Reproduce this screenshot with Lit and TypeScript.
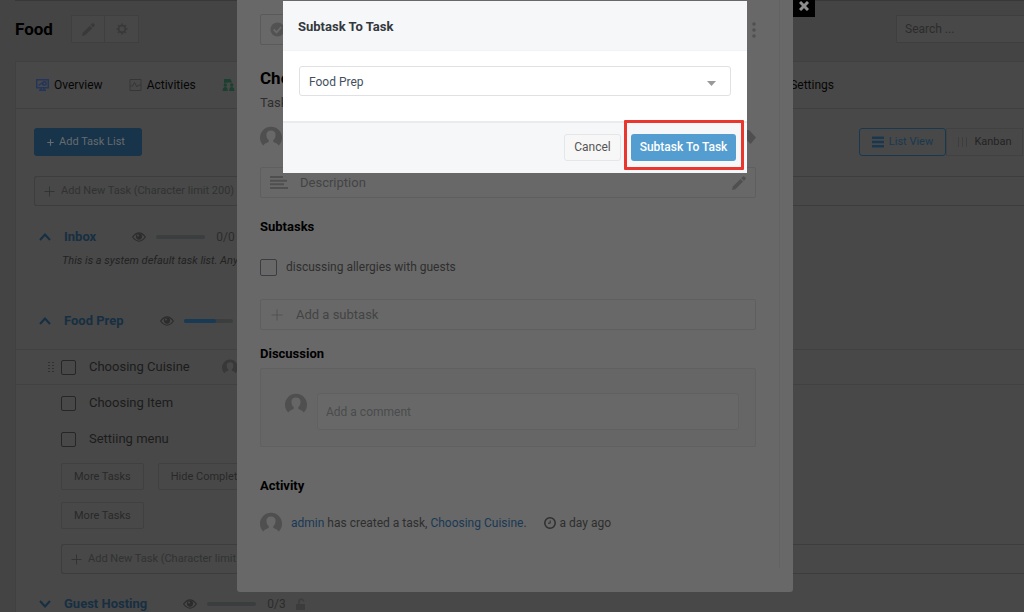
import { LitElement, html, css, svg, nothing } from "lit";
import { customElement, property } from "lit/decorators.js";

const avatar = html`<svg class="avatar" viewBox="0 0 22 22" aria-hidden="true">
  <path d="M3.200 19.500A11 11 0 1 1 18.800 19.500Q18 17.600 14 16.300Q12.900 15.800 13.200 14.600Q15.600 12.600 15.600 9.200Q15.600 4.600 11 4.600Q6.400 4.600 6.400 9.200Q6.400 12.600 8.800 14.600Q9.100 15.800 8 16.300Q4 17.600 3.200 19.500Z"/>
</svg>`;

const plus = html`<svg class="plus" viewBox="0 0 12 12" aria-hidden="true"><path d="M6 .5v11M.5 6h11"/></svg>`;

const pencil = html`<svg class="pencil" viewBox="0 0 14 14" aria-hidden="true">
  <path d="M0 14l.8-3.400L8.500 3l2.600 2.600-7.700 7.600zM9.300 2.200L11 .4q.6-.5 1.200 0l1.400 1.400q.5.6 0 1.200L11.900 4.800z"/>
</svg>`;

const eye = html`<svg class="eye" viewBox="0 0 14 10" aria-hidden="true">
  <path d="M.6 5Q7-3.300 13.400 5Q7 13.300.6 5Z" fill="none" stroke="currentColor" stroke-width="1.200"/>
  <circle cx="7" cy="4.600" r="3.100" fill="currentColor"/><circle cx="6" cy="3.500" r="1" fill="#484848"/>
</svg>`;

@customElement("task-list-head")
class TaskListHead extends LitElement {
  @property() name = "";
  @property() count = "";
  @property({ type: Number }) progress = 0;
  @property({ type: Boolean }) open = false;
  @property({ type: Boolean }) locked = false;

  static styles = css`
    :host { display: flex; align-items: center; height: 20px; color: #2c2c2c; }
    button { all: unset; width: 14px; height: 14px; display: flex; align-items: center; color: #172f42; }
    .chevron { width: 12px; height: 8px; fill: none; stroke: currentColor; stroke-width: 2; }
    a { margin-left: 11px; color: #172f42; font-weight: 700; font-size: 13px; text-decoration: none; }
    .eye { width: 14px; height: 10px; margin-left: 36px; }
    .track { width: 49px; height: 4px; border-radius: 2px; background: #3b3e3e; margin: 0 11px 0 10px; }
    .fill { height: 100%; border-radius: 2px; background: #183a54; }
    .count { font-size: 12px; }
    .lock { width: 10px; height: 12px; margin-left: 10px; color: #3c3c3c; }
  `;

  render() {
    return html`
      <button aria-label="Toggle ${this.name}">
        <svg class="chevron" viewBox="0 0 12 8"><path d=${this.open ? "M1 7l5-5.500 5 5.500" : "M1 1l5 5.500 5-5.500"} /></svg>
      </button>
      <a href="#">${this.name}</a>
      ${eye}
      <div class="track"><div class="fill" style="width:${this.progress}%"></div></div>
      <span class="count">${this.count}</span>
      ${this.locked
        ? html`<svg class="lock" viewBox="0 0 10 12" aria-hidden="true">
            <path d="M0 6h9v6H0z" fill="currentColor" /><path d="M3 6V3.500a2.300 2.300 0 0 1 4.600 0" fill="none" stroke="currentColor" stroke-width="1.400" />
          </svg>`
        : nothing}
    `;
  }
}

@customElement("project-page")
class ProjectPage extends LitElement {
  static styles = css`
    :host { display: block; background: #444; padding-left: 15px; color: #1c1c1c; font-size: 11px; }
    * { box-sizing: border-box; }
    button, input { font: inherit; color: inherit; }
    a { color: inherit; text-decoration: none; }
    .top { display: flex; align-items: center; border-top: 1px solid #383838; padding: 14px 0 18px; }
    h1 { margin: 0; font-size: 17px; line-height: 28px; font-weight: 700; color: #000; width: 56px; }
    .tools { display: flex; }
    .tools button { width: 34px; height: 28px; display: flex; align-items: center; justify-content: center; padding: 0;
      background: #474747; border: 1px solid #3f3f3f; color: #393939; }
    .tools button + button { border-left: 0; }
    .pencil { width: 13px; height: 13px; fill: currentColor; }
    .gear { width: 12px; height: 12px; }
    .search { margin-left: auto; width: 128px; height: 28px; padding: 0 8px; border: 1px solid #3e3e3e; border-right: 0;
      background: #484848; outline: 0; font-size: 12px; }
    input::placeholder { color: inherit; opacity: 1; }
    .search::placeholder { color: #2c2c2c; }
    .panel { background: #484848; border: solid #404040; border-width: 1px 0 0 1px; }
    nav { display: flex; align-items: center; height: 47px; gap: 26px; padding: 0 190px 0 20px; border-bottom: 1px solid #3f3f3f;
      font-size: 12px; color: #060606; }
    nav a { display: flex; align-items: center; gap: 5px; }
    nav a:last-child { margin-left: auto; }
    nav svg { width: 13px; height: 12px; }
    .bar { display: flex; align-items: center; padding: 19px 1px 20px 18px; }
    .add { height: 28px; width: 108px; border: 0; border-radius: 3px; background: #17344a; color: #686b6d; padding: 0 4px 0 0;
      display: flex; align-items: center; justify-content: center; gap: 5px; }
    .add .plus { width: 7px; height: 7px; stroke-width: 2; }
    .views { margin-left: auto; display: flex; }
    .views button { height: 28px; width: 77px; padding: 0; border: 1px solid #414141; background: none; display: flex; align-items: center;
      justify-content: center; gap: 5px; color: #232323; }
    .views .on { width: 87px; border-color: #193850; border-radius: 3px; color: #193850; }
    .views svg { width: 12px; height: 12px; }
    .plus { width: 11px; height: 11px; fill: none; stroke: currentColor; flex: none; }
    .new { display: flex; align-items: center; gap: 6px; height: 30px; border: 1px solid #3d3d3d; border-right: 0; border-radius: 3px 0 0 3px;
      padding-left: 9px; color: #303232; margin-left: 18px; }
    .new input { flex: 1; min-width: 0; border: 0; background: none; outline: 0; padding: 0; }
    .new.inner { margin: 15px 0 20px 45px; }
    .head { padding-left: 23px; }
    .first { margin-top: 21px; }
    .desc { margin: 4px 0 0 46px; line-height: 20px; font-style: italic; color: #222; }
    .second { margin-top: 40px; padding-bottom: 18px; }
    .task { display: flex; align-items: center; height: 36px; padding-left: 31px; font-size: 13px; }
    .task.hover { border: solid #414141; border-width: 1px 0; }
    .grip { width: 8px; height: 12px; margin-right: 6px; fill: #303030; }
    .task label { display: flex; align-items: center; gap: 13px; }
    .task input { appearance: none; margin: 0; width: 15px; height: 15px; border: 1px solid #262626; border-radius: 2px; }
    .avatar { width: 16px; height: 16px; fill: #383838; margin-left: 32px; }
    .more { display: flex; gap: 14px; padding: 6px 0 0 45px; }
    .more + .more { padding-top: 12px; }
    .more button { height: 27px; padding: 0 12px; background: none; border: 1px solid #404040; border-radius: 2px; color: #282828; }
  `;

  render() {
    return html`
      <header class="top">
        <h1>Food</h1>
        <div class="tools">
          <button aria-label="Edit">${pencil}</button>
          <button aria-label="Project settings">
            <svg class="gear" viewBox="0 0 14 14" fill="none" stroke="currentColor">
              <circle cx="7" cy="7" r="3.900" stroke-width="2" />
              <path stroke-width="2" d="M7 .5v2M7 11.500v2M.5 7h2M11.500 7h2M2.400 2.400l1.400 1.400M10.200 10.200l1.400 1.400M2.400 11.600l1.400-1.400M10.200 3.800l1.400-1.400" />
            </svg>
          </button>
        </div>
        <input class="search" type="search" placeholder="Search ..." aria-label="Search" />
      </header>
      <main class="panel">
        <nav>
          <a href="#"><svg viewBox="0 0 13 12" fill="none" stroke="#22355c" stroke-width="1.400"><path d="M.7.7h11.600v8H.7zM3 11.200h7M2.500 6.500l3.500-2.500 1 2M5 9v2M8 9v2" /><circle cx="8.500" cy="4.500" r="1.700" /></svg>Overview</a>
          <a href="#"><svg viewBox="0 0 12 12" fill="none" stroke="#363636"><path d="M.5.5h11v11H.5zM.5 7h2.500l2-3.500L7.500 8 9 6h2.500" /></svg>Activities</a>
          <a href="#"><svg viewBox="0 0 12 12" fill="#1b4030"><circle cx="2.800" cy="6" r="1.700" /><circle cx="9.200" cy="6" r="1.700" /><path d="M1.500 0h6.500l1.500 3.500H5.500L1.500 4zM0 12Q.3 8 2.800 8T5.300 12zM6.700 12Q6.700 8 9.200 8T12 12z" /></svg>Discussions</a>
          <a href="#">Settings</a>
        </nav>
        <div class="bar">
          <button class="add">${plus}Add Task List</button>
          <div class="views">
            <button class="on"><svg viewBox="0 0 12 12" fill="currentColor"><path d="M0 .5h12v2.500H0zM0 4.800h12v2.500H0zM0 9h12v2.500H0z" /></svg>List View</button>
            <button><svg viewBox="0 0 12 12" stroke="#3c3e3e"><path d="M1.500 1v10M5.500 1v10M9.500 1v10" /></svg>Kanban</button>
          </div>
        </div>
        <label class="new">${plus}<input placeholder="Add New Task (Character limit 200)" /></label>
        <div class="head first"><task-list-head name="Inbox" count="0/0" open></task-list-head></div>
        <p class="desc">This is a system default task list. Any</p>
        <div class="head second"><task-list-head name="Food Prep" count="2/3" progress="67" open></task-list-head></div>
        ${["Choosing Cuisine", "Choosing Item", "Settiing menu"].map(
          (name, i) => html`<div class="task ${i === 0 ? "hover" : ""}">
            <svg class="grip" viewBox="0 0 8 12">${i === 0
              ? [1, 4, 7, 10].map((y) => svg`<rect x="1" y=${y} width="2" height="1"/><rect x="5" y=${y} width="2" height="1"/>`)
              : nothing}</svg>
            <label><input type="checkbox" />${name}</label>
            ${i === 0 ? avatar : nothing}
          </div>`
        )}
        <div class="more"><button>More Tasks</button><button>Hide Completed</button></div>
        <div class="more"><button>More Tasks</button></div>
        <label class="new inner">${plus}<input placeholder="Add New Task (Character limit 200)" /></label>
        <div class="head"><task-list-head name="Guest Hosting" count="0/3" locked></task-list-head></div>
      </main>
    `;
  }
}

@customElement("task-detail")
class TaskDetail extends LitElement {
  static styles = css`
    :host { display: block; position: relative; width: 556px; height: 592px; background: #686868; color: #2e2e2e; border-radius: 0 0 3px 3px; }
    * { box-sizing: border-box; }
    input { font: inherit; color: inherit; outline: 0; }
    input::placeholder { color: inherit; opacity: 1; }
    a { color: #193854; text-decoration: none; }
    .close { position: absolute; left: 100%; top: 0; width: 22px; height: 17px; padding: 0 0 6px; border: 0; background: #000; color: #8d8d8d;
      display: flex; align-items: center; justify-content: center; }
    .close svg { width: 10px; height: 10px; stroke: currentColor; stroke-width: 3; }
    .content { height: 568px; margin-right: 13px; padding: 14px 23px 0 23px; border-right: 1px solid #626262; }
    .row { display: flex; align-items: center; }
    .between { justify-content: space-between; }
    .done { width: 34px; height: 31px; padding: 0; background: none; border: 1px solid #5a5a5a; border-radius: 2px; }
    .done svg { width: 15px; height: 15px; display: block; margin: auto; }
    .dots { all: unset; width: 4px; height: 18px; }
    .dots svg { display: block; width: 4px; height: 18px; fill: #505050; }
    h2 { margin: 21px 0 0; font-size: 17px; line-height: 24px; color: #000; font-weight: 700; }
    .list { font-size: 13px; line-height: 20px; margin: 3px 0 13px; }
    .avatar { width: 22px; height: 22px; fill: #4f4f4f; flex: none; }
    .tag { width: 12px; height: 14px; fill: #4f4f4f; }
    .box { display: flex; align-items: center; height: 31px; border: 1px solid #5f5f5f; color: #434444; font-size: 13px; padding: 0 9px; border-radius: 2px; }
    .box input { flex: 1; min-width: 0; border: 0; background: none; padding: 0; }
    .description { margin-top: 19px; }
    .lines { width: 18px; height: 13px; stroke: #4f4f4f; stroke-width: 2; margin-right: 12px; }
    .pencil { width: 14px; height: 14px; fill: #505050; }
    h3 { margin: 0; font-size: 13px; line-height: 20px; font-weight: 700; color: #000; }
    .subtasks { margin-top: 19px; }
    .subtask { display: flex; align-items: center; gap: 9px; height: 20px; margin: 20px 0 22px; }
    .subtask input { appearance: none; margin: 0; width: 17px; height: 17px; border: 1px solid #3a3e42; border-radius: 2px; }
    .plus { width: 12px; height: 12px; fill: none; stroke: #525252; margin: 0 13px 0 1px; }
    .discussion { margin-top: 14px; }
    .comment { display: flex; gap: 10px; height: 79px; border: 1px solid #606060; border-radius: 2px; background: #666; margin-top: 4px; padding: 24px 16px 16px 24px; }
    .comment input { flex: 1; min-width: 0; height: 37px; border: 1px solid #616161; border-radius: 3px; background: #686868; color: #494c4c; padding: 0 8px; }
    .activity { margin-top: 29px; }
    .event { display: flex; align-items: center; margin-top: 16px; height: 22px; }
    .event p { margin: 0 17px 0 9px; }
    .clock { width: 12px; height: 12px; margin-right: 4px; fill: none; stroke: currentColor; }
  `;

  render() {
    return html`
      <button class="close" aria-label="Close"><svg viewBox="0 0 10 10"><path d="M1 1l8 8M9 1l-8 8" /></svg></button>
      <div class="content">
        <div class="row between">
          <button class="done" aria-label="Mark complete"><svg viewBox="0 0 16 16"><circle cx="8" cy="8" r="7.500" fill="#525252" /><path d="M4 8l3 3 5-5.500" fill="none" stroke="#686868" stroke-width="2" /></svg></button>
          <button class="dots" aria-label="More actions"><svg viewBox="0 0 4 18"><circle cx="2" cy="3" r="1.800" /><circle cx="2" cy="9" r="1.800" /><circle cx="2" cy="15" r="1.800" /></svg></button>
        </div>
        <h2>Choosing Cuisine</h2>
        <div class="list">Task List: Food Prep</div>
        <div class="row between">${avatar}<svg class="tag" viewBox="0 0 12 14"><path d="M0 0h5l7 7.500L6.500 14 0 7z" /></svg></div>
        <label class="box description">
          <svg class="lines" viewBox="0 0 18 13"><path d="M0 1h13M0 4.700h17M0 8.300h14M0 12h18" /></svg>
          <input placeholder="Description" />${pencil}
        </label>
        <h3 class="subtasks">Subtasks</h3>
        <label class="subtask"><input type="checkbox" />discussing allergies with guests</label>
        <label class="box">${plus}<input placeholder="Add a subtask" /></label>
        <h3 class="discussion">Discussion</h3>
        <div class="comment">${avatar}<input placeholder="Add a comment" aria-label="Add a comment" /></div>
        <h3 class="activity">Activity</h3>
        <div class="event">
          ${avatar}
          <p><a href="#">admin</a> has created a task, <a href="#">Choosing Cuisine</a>.</p>
          <svg class="clock" viewBox="0 0 12 12"><circle cx="6" cy="6" r="5.200" stroke-width="1.500" /><path d="M6.200 3.500v2.700H4" /></svg>
          <time>a day ago</time>
        </div>
      </div>
    `;
  }
}

@customElement("convert-dialog")
class ConvertDialog extends LitElement {
  static styles = css`
    :host { display: block; width: 464px; background: #fff; color: #33383d; }
    * { box-sizing: border-box; }
    header { background: #f6f7f9; height: 50px; padding: 2px 15px 0; display: flex; align-items: center; border-bottom: 1px solid #f1f3f4; }
    h2 { margin: 0; font-size: 13px; line-height: 20px; font-weight: 700; }
    .field { position: relative; display: block; padding: 15px 16px 25px; }
    select { appearance: none; display: block; width: 100%; height: 30px; border: 1px solid #dfe1e2; border-radius: 3px; background: #fff;
      padding: 2px 9px 0; font: inherit; color: #424f60; outline: 0; }
    .arrow { position: absolute; right: 31px; top: 30px; width: 9px; height: 5px; fill: #999; }
    footer { display: flex; justify-content: flex-end; align-items: center; gap: 10px; height: 52px; padding: 0 11px 2px; background: #f6f7f9; border-top: 2px solid #e9ebec; }
    button { font: inherit; height: 27px; width: 57px; padding: 0; border-radius: 3px; background: #f7f7f7; border: 1px solid #e5e6e7; color: #555; }
    .target { position: relative; }
    .target::after { content: ""; position: absolute; inset: -14px -8px -9px -7px; border: 3px solid #e9362f; border-radius: 1px; pointer-events: none; }
    .primary { display: block; width: 105px; background: #549dd1; border: 0; color: #fff; font-weight: 500; }
  `;

  render() {
    return html`
      <header><h2>Subtask To Task</h2></header>
      <label class="field">
        <select aria-label="Task list"><option>Food Prep</option></select>
        <svg class="arrow" viewBox="0 0 9 5" aria-hidden="true"><path d="M0 0h9L4.500 5z" /></svg>
      </label>
      <footer>
        <button>Cancel</button>
        <span class="target"><button class="primary">Subtask To Task</button></span>
      </footer>
    `;
  }
}

@customElement("app-root")
class AppRoot extends LitElement {
  static styles = css`
    :host { display: block; position: relative; height: 100vh; overflow: hidden; background: #444; font: 12px/16px Roboto, "Liberation Sans", sans-serif; }
    .layer { position: absolute; inset: 0; display: flex; justify-content: center; align-items: flex-start; padding-left: 6px; }
    .front { padding-top: 1px; }
  `;

  render() {
    return html`
      <project-page></project-page>
      <div class="layer"><task-detail></task-detail></div>
      <div class="layer front"><convert-dialog></convert-dialog></div>
    `;
  }
}
